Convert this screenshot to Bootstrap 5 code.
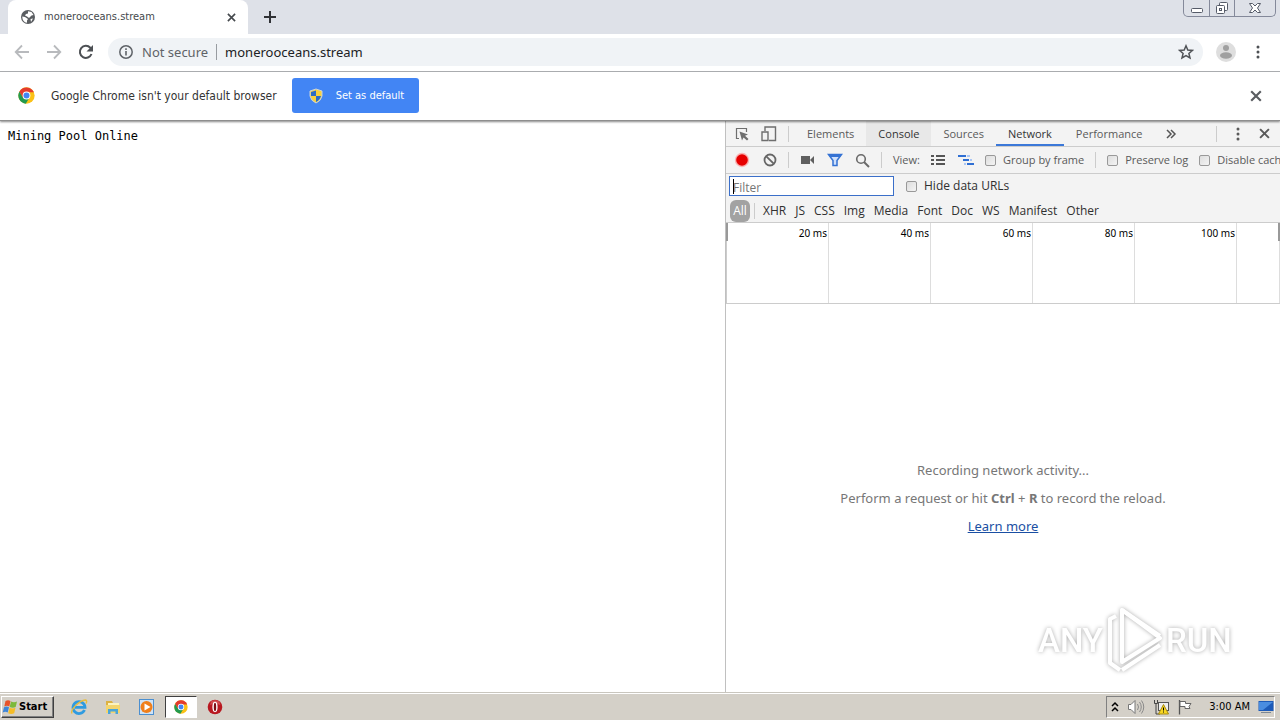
<!DOCTYPE html>
<html lang="en">
<head>
<meta charset="utf-8">
<meta name="viewport" content="width=device-width, initial-scale=1">
<title>monerooceans.stream</title>
<link href="https://cdn.jsdelivr.net/npm/bootstrap@5.3.0/dist/css/bootstrap.min.css" rel="stylesheet">
<style>
  body { font-family: "Open Sans", "Noto Sans", sans-serif; font-size: 12px; line-height: 16px; color: #333; background: #fff; }
  button { font: inherit; color: inherit; background: none; border: 0; padding: 0; }
  svg { display: block; flex: none; }
  .ui { font-family: "Noto Sans", sans-serif; }
  .narrow-ui { font-family: "DejaVu Sans Condensed", "DejaVu Sans", sans-serif; }

  /* browser window */
  .tabstrip { height: 34px; background: #dee1e8; padding-left: 8px; }
  .page-tab { width: 240px; height: 34px; background: #fff; border-radius: 8px 8px 0 0; padding: 0 12px; font-size: 11px; color: #45494d; }
  .new-tab { margin-left: 16px; color: #303236; }
  .win-ctl { height: 17px; margin-right: 4px; border: 1px solid #84899a; border-top: 0; border-radius: 0 0 5px 5px; }
  .win-ctl button { width: 25px; height: 16px; display: flex; justify-content: center; align-items: center; }
  .win-ctl button + button { border-left: 1px solid #84899a; }
  .win-ctl button:last-child { width: 41px; }
  .toolbar { height: 38px; border-bottom: 1px solid #b0b2b5; padding: 0 20px 1px 14px; }
  .omnibox { height: 28px; border-radius: 14px; background: #f0f3f6; padding: 0 9px 0 10px; margin: 0 13px 0 14px; font-size: 13px; color: #5f6368; }
  .omnibox input { border: 0; background: none; outline: 0; padding: 0; min-width: 0; color: #202124; }
  .omni-rule { width: 1px; height: 16px; background: #989ca1; margin: 0 8px; }
  .profile { margin-right: 20px; }
  .infobar { height: 49px; border-bottom: 1px solid #8e8e8e; padding: 0 18px 1px; font-size: 12px; position: relative; z-index: 1; box-shadow: 0 1px 2px #0007; }
  .set-default { width: 127px; height: 35px; background: #4285f4; color: #fff; border-radius: 3px; font-size: 11px; padding: 0 16px; margin-left: 15px; white-space: nowrap; }
  .dismiss { color: #5a5d61; }
  .page-area { min-height: 0; }
  .page-text { font-family: "DejaVu Sans Mono", monospace; font-size: 12px; color: #000; margin: 0; padding: 7px 8px; overflow: hidden; }

  /* developer tools */
  .devtools { flex: 0 0 555px; border-left: 1px solid #c0c0c0; color: #5a5a5a; white-space: nowrap; overflow: hidden; }
  .bar { background: #f3f3f3; }
  .bar > * { flex: none; }
  .dt-tabs { height: 26px; border-bottom: 1px solid #ccc; padding: 0 10px 0 8px; font-size: 11px; }
  .dt-tabs .dt-tab { height: 25px; padding: 2px 12px 0; border-bottom: 2px solid transparent; }
  .dt-tabs .hovered { background: #e8e8e8; color: #333; }
  .dt-tabs .chosen { border-bottom-color: #3b78d8; color: #333; }
  .dt-icons { gap: 11px; margin-right: 6px; }
  .dt-end { gap: 19px; }
  .dt-tools { height: 27px; border-bottom: 1px solid #ccc; padding-left: 8px; gap: 11px; font-size: 11px; }
  .dt-filter { height: 24px; padding-left: 3px; gap: 12px; color: #303030; }
  .dt-types { height: 25px; padding: 2px 0 0 4px; border-bottom: 1px solid #ccc; color: #303030; }
  .types { gap: 9px; }
  .rule { width: 1px; height: 16px; background: #ccc; }
  .bar input[type=checkbox] { appearance: none; width: 11px; height: 11px; border: 1px solid #999; border-radius: 2px; background: linear-gradient(135deg, #ddd, #f4f4f4); margin: 0 7px 0 0; }
  .bar label { display: flex; align-items: center; }
  .filter-box { width: 165px; height: 20px; border: 1px solid #3b6fc9; background: #fff; padding: 2px 3px 0; outline: 0; line-height: 16px; }
  .filter-box::placeholder { color: #757575; opacity: 1; }
  .filter-wrap { position: relative; }
  .filter-wrap i { position: absolute; left: 4px; top: 3px; width: 1px; height: 15px; background: #000; }
  .type-all { background: #a2a2a2; color: #fff; border-radius: 6px; height: 22px; width: 20px; margin-right: 4px; }
  .timeline { height: 81px; border-bottom: 1px solid #ccc; border-left: 1px solid #ccc; font-size: 10px; color: #000; position: relative; }
  .timeline > div { flex: 0 0 102px; border-right: 1px solid #ddd; text-align: right; padding: 2px 1px; }
  .timeline > div:last-of-type { flex: 1 1 0; }
  .timeline .grip { position: absolute; top: 0; left: -1px; width: 2px; height: 18px; background: #999; }
  .timeline .grip-end { left: auto; right: 0; }
  .hint { font-size: 13px; line-height: 20px; gap: 8px; color: #777; }
  .hint a { color: #1a4fa3; }

  .watermark { position: absolute; right: 40px; bottom: 16px; filter: drop-shadow(0 0 2px #0005); pointer-events: none; }
  .watermark text { font-family: "Liberation Sans Narrow", "Roboto", sans-serif; font-size: 33px; font-weight: 500; }

  /* taskbar */
  .taskbar { height: 28px; background: #d4d0c8; border-top: 1px solid #c9c6be; box-shadow: inset 0 1px #fff; padding: 1px 5px 0 1px; font-size: 11px; color: #000; }
  .raised { border: 1px solid; border-color: #fff #404040 #404040 #fff; box-shadow: inset -1px -1px #808080; }
  .sunken { border: 1px solid; border-color: #404040 #fff #fff #404040; background: #fff; }
  .start { width: 53px; height: 22px; font-weight: 700; gap: 1px; }
  .task { width: 32px; height: 22px; display: flex; align-items: center; justify-content: center; }
  .tasks { gap: 2px; margin-left: 9px; }
  .tray { height: 22px; border: 1px solid; border-color: #808080 #fff #fff #808080; padding-left: 4px; gap: 8px; }
  .clock { margin-left: 8px; }
</style>
</head>
<body class="d-flex flex-column vh-100 overflow-hidden">
<svg width="0" height="0" class="position-absolute" aria-hidden="true">
  <symbol id="chrome" viewBox="0 0 48 48">
    <circle cx="24" cy="24" r="23" fill="#fbc116"/>
    <path d="M4 12.500A23 23 0 0 0 22 47L33 29 24 24 14 29z" fill="#229a4f"/>
    <path d="M4 12.500 14 30 20 15H45A23 23 0 0 0 4 12.500z" fill="#e33b2e"/>
    <circle cx="24" cy="24" r="11" fill="#fff"/><circle cx="24" cy="24" r="8.500" fill="#4285f4"/>
  </symbol>
  <symbol id="cross" viewBox="0 0 10 10"><path d="M1 1 9 9M9 1 1 9" stroke="currentColor" stroke-width="1.800"/></symbol>
  <symbol id="dots" viewBox="0 0 4 14"><g fill="currentColor"><circle cx="2" cy="2" r="1.500"/><circle cx="2" cy="7" r="1.500"/><circle cx="2" cy="12" r="1.500"/></g></symbol>
</svg>

<header class="ui">
  <div class="tabstrip d-flex">
    <div class="page-tab narrow-ui d-flex align-items-center">
      <svg width="16" height="16" viewBox="0 0 16 16"><circle cx="8" cy="8" r="7" fill="#5a5d61"/><path d="M2.300 7.500 5 8l3 2-1 1.500v2.300C4 13.500 2.300 11 2.300 7.500zM8 2.300l3.500.8 2 3-2 .5L9 9 7 7.500l-2-1L6 5l2-.5zM10.500 10l2.500-.5-2 3.500z" fill="#fff"/></svg>
      <span class="ms-2 flex-grow-1">monerooceans.stream</span>
      <button aria-label="Close tab"><svg width="9" height="9"><use href="#cross"/></svg></button>
    </div>
    <button class="new-tab" aria-label="New tab"><svg width="12" height="12" viewBox="0 0 12 12"><path d="M6 0v12M0 6h12" stroke="currentColor" stroke-width="2"/></svg></button>
    <div class="win-ctl d-flex ms-auto">
      <button aria-label="Minimize"><svg width="14" height="14" viewBox="0 0 14 14"><rect x="1.500" y="7.500" width="11" height="4" rx="1" fill="#fff" stroke="#555b68"/></svg></button>
      <button aria-label="Restore"><svg width="14" height="14" viewBox="0 0 14 14" fill="#fff" stroke="#555b68"><rect x="4.500" y="1.500" width="8" height="8" rx="1"/><rect x="1.500" y="4.500" width="8" height="8" rx="1"/><rect x="4.500" y="7.500" width="2" height="2"/></svg></button>
      <button aria-label="Close window"><svg width="14" height="14" viewBox="0 0 14 14"><path d="M1.500 2.500h3L7 5l2.500-2.500h3L9.500 7l3 4.500h-3L7 9l-2.500 2.500h-3l3-4.500z" fill="#fff" stroke="#555b68"/></svg></button>
    </div>
  </div>
  <div class="toolbar d-flex align-items-center">
    <button aria-label="Back"><svg width="16" height="16" viewBox="0 0 16 16" fill="none" stroke="#b8babd" stroke-width="1.800"><path d="M15 8H2M8 1.500 1.700 8 8 14.500"/></svg></button>
    <button class="ms-3" aria-label="Forward"><svg width="16" height="16" viewBox="0 0 16 16" fill="none" stroke="#b8babd" stroke-width="1.800"><path d="M1 8h13M8 1.500 14.300 8 8 14.500"/></svg></button>
    <button class="ms-3" aria-label="Reload"><svg width="16" height="16" viewBox="0 0 16 16"><path d="M13.500 10A6 6 0 1 1 12.300 3.800L14 5.500" fill="none" stroke="#4d5054" stroke-width="2"/><path d="M15 1v6.500H8.500z" fill="#4d5054"/></svg></button>
    <div class="omnibox d-flex align-items-center flex-grow-1">
      <svg width="16" height="16" viewBox="0 0 16 16"><circle cx="8" cy="8" r="6.200" fill="none" stroke="#5f6368" stroke-width="1.500"/><path d="M8 7v4.500M8 4.300v1.600" stroke="#5f6368" stroke-width="1.600"/></svg>
      <label for="url" class="ms-2">Not secure</label>
      <span class="omni-rule"></span>
      <input id="url" class="flex-grow-1" value="monerooceans.stream">
      <button aria-label="Bookmark"><svg width="16" height="16" viewBox="0 0 16 16"><path d="M8 1.800 9.800 6l4.600.4-3.500 3 1.100 4.500L8 11.500l-4 2.400 1.100-4.500-3.500-3L6.200 6z" fill="none" stroke="#505357" stroke-width="1.500"/></svg></button>
    </div>
    <button class="profile" aria-label="Profile"><svg width="20" height="20" viewBox="0 0 20 20"><circle cx="10" cy="10" r="10" fill="#dedede"/><circle cx="10" cy="6" r="3" fill="#a0a0a0"/><ellipse cx="10" cy="13.500" rx="6" ry="3.200" fill="#a0a0a0"/></svg></button>
    <button aria-label="Menu"><svg width="4" height="14" color="#4d5054"><use href="#dots"/></svg></button>
  </div>
  <div class="infobar narrow-ui d-flex align-items-center">
    <svg width="17" height="17"><use href="#chrome"/></svg>
    <span class="ms-3">Google Chrome isn't your default browser</span>
    <button class="set-default d-flex align-items-center">
      <svg width="16" height="16" viewBox="0 0 16 16"><path d="M8 1 14 3v5q-1 5-6 7-5-2-6-7V3z" fill="#f7d13d"/><path d="M8 2.500V8H3V4zM8 8h5q-1 4-5 6z" fill="#2b6cc4"/><path d="M8 1 14 3v5q-1 5-6 7-5-2-6-7V3z" fill="none" stroke="#c8d3de"/></svg>
      <span class="ms-2 ps-1">Set as default</span>
    </button>
    <button class="dismiss ms-auto" aria-label="Dismiss"><svg width="12" height="12"><use href="#cross"/></svg></button>
  </div>
</header>

<main class="page-area d-flex flex-grow-1 position-relative">
  <pre class="page-text flex-grow-1">Mining Pool Online</pre>

  <aside class="devtools d-flex flex-column">
    <nav class="bar dt-tabs d-flex align-items-center">
      <div class="dt-icons d-flex align-items-center">
        <button aria-label="Inspect"><svg width="16" height="16" viewBox="0 0 16 16"><path d="M5 12.500H2.500v-10h10V6" fill="none" stroke="#6e6e6e" stroke-width="1.200"/><path d="M5.500 5.500 14 8.500l-3 1.300 3.500 3.200-1.500 1.500-3.500-3L8 14.500z" fill="#6e6e6e"/></svg></button>
        <button aria-label="Device toolbar"><svg width="16" height="16" viewBox="0 0 16 16" fill="none" stroke="#6e6e6e" stroke-width="1.400"><path d="M4 5V1h10.500v13.500H8"/><path d="M1 6h6v8.500H1z"/></svg></button>
        <span class="rule"></span>
      </div>
      <button class="dt-tab">Elements</button>
      <button class="dt-tab hovered">Console</button>
      <button class="dt-tab">Sources</button>
      <button class="dt-tab chosen">Network</button>
      <button class="dt-tab">Performance</button>
      <button class="ms-2 ps-1" aria-label="More tabs"><svg width="12" height="10" viewBox="0 0 12 10"><path d="M1 1l4 4-4 4M5 1l4 4-4 4" fill="none" stroke="#555" stroke-width="1.500"/></svg></button>
      <div class="dt-end ms-auto d-flex align-items-center">
        <span class="rule"></span>
        <button aria-label="Customize"><svg width="4" height="14"><use href="#dots"/></svg></button>
        <button aria-label="Close tools"><svg width="11" height="11"><use href="#cross"/></svg></button>
      </div>
    </nav>
    <div class="bar dt-tools d-flex align-items-center">
      <button aria-label="Record"><svg width="16" height="16" viewBox="0 0 16 16"><circle cx="8" cy="8" r="7.200" fill="#f9b3b3"/><circle cx="8" cy="8" r="5.800" fill="#e60000"/></svg></button>
      <button aria-label="Clear"><svg width="16" height="16" viewBox="0 0 16 16" fill="none" stroke="#666" stroke-width="1.800"><circle cx="9" cy="8" r="5.500"/><path d="m5.300 4.300 7.400 7.400"/></svg></button>
      <span class="rule"></span>
      <button aria-label="Screenshots"><svg width="16" height="14" viewBox="0 0 16 14"><path d="M1 3h9v8H1zM10 7 14 3v8z" fill="#5f5f5f"/></svg></button>
      <button aria-label="Filter"><svg width="16" height="14" viewBox="0 0 16 14"><path d="M1.500 1.500h13l-4.500 6v5H6v-5z" fill="#cfe0fb" stroke="#3472d4" stroke-width="1.500"/><path d="M1.500 1.500h13L13 4H3z" fill="#3472d4"/></svg></button>
      <button aria-label="Search"><svg width="16" height="15" viewBox="0 0 16 15" fill="none" stroke="#6a6a6a" stroke-width="1.600"><circle cx="7" cy="6" r="4.300"/><path d="m10 9 5 5" stroke-width="2"/></svg></button>
      <span class="rule"></span>
      <span>View:</span>
      <button aria-label="Large rows"><svg width="16" height="12" viewBox="0 0 16 12" fill="#555"><path d="M0 1h3v2H0zM5 1h9v2H5zM0 5h3v2H0zM5 5h9v2H5zM0 9h3v2H0zM5 9h9v2H5z"/></svg></button>
      <button aria-label="Overview"><svg width="16" height="12" viewBox="0 0 16 12"><path d="M0 1h8v2H0zM5 5h6v2H5zM9 9h7v2H9z" fill="#2f6fd3"/><path d="M9 1h3v2H9zM12 5h2v2h-2zM6 9h2v2H6z" fill="#a9c6f5"/></svg></button>
      <label><input type="checkbox">Group by frame</label>
      <span class="rule"></span>
      <label><input type="checkbox">Preserve log</label>
      <label><input type="checkbox">Disable cache</label>
    </div>
    <div class="bar dt-filter d-flex align-items-center">
      <div class="filter-wrap d-flex"><input class="filter-box" type="text" placeholder="Filter" aria-label="Filter"><i></i></div>
      <label><input type="checkbox">Hide data URLs</label>
    </div>
    <div class="bar dt-types d-flex align-items-center">
      <button class="type-all">All</button><span class="rule me-2"></span>
      <div class="d-flex types">
        <button>XHR</button><button>JS</button><button>CSS</button><button>Img</button><button>Media</button><button>Font</button><button>Doc</button><button>WS</button><button>Manifest</button><button>Other</button>
      </div>
    </div>
    <div class="timeline ui d-flex">
      <div>20 ms</div><div>40 ms</div><div>60 ms</div><div>80 ms</div><div>100 ms</div><div></div>
      <span class="grip"></span><span class="grip grip-end"></span>
    </div>
    <div class="hint ui flex-grow-1 d-flex flex-column align-items-center justify-content-center">
      <span>Recording network activity...</span>
      <span>Perform a request or hit <b>Ctrl</b> + <b>R</b> to record the reload.</span>
      <a href="#">Learn more</a>
    </div>
  </aside>

  <svg class="watermark" width="210" height="72" viewBox="0 0 210 72" role="img" aria-label="ANY RUN">
    <text x="8" y="48" fill="#fff">ANY</text>
    <text x="136" y="48" fill="#fff">RUN</text>
    <g fill="none" stroke="#fff" stroke-width="4" stroke-linejoin="round">
      <path d="M86 12 80 15V59L90 66"/>
      <path d="M92 6V58L130 34z"/>
      <path d="M92 6 130 32M92 66 130 41"/>
    </g>
  </svg>
</main>

<footer class="taskbar d-flex align-items-center">
  <button class="start raised narrow-ui d-flex align-items-center">
    <svg width="16" height="16" viewBox="0 0 16 16"><path d="M3.500 2Q6 .5 8.500 2L7.300 7.500Q5 6 2.300 7.500z" fill="#e8532a"/><path d="M9 2.500q3 1.500 6 0L13.700 8q-3 1.500-6 0z" fill="#7db93b"/><path d="M2 8.200Q4.500 6.700 7 8.200L5.700 13.500Q3.500 12 .7 13.500z" fill="#3f86d8"/><path d="M7.500 8.700q3 1.500 6 0l-1.300 5.500q-3 1.500-6 0z" fill="#f6bd27"/></svg>Start
  </button>
  <div class="tasks d-flex">
    <button class="task" aria-label="Internet Explorer"><svg width="18" height="18" viewBox="0 0 18 18" fill="none"><path d="M14.500 12A6 6 0 1 1 15 9.300H5" stroke="#2f9be0" stroke-width="2.800"/><path d="M2 15.500C0 12 9 2.500 15.500 2q2 .5.500 3.500" stroke="#e9bd3d" stroke-width="1.400"/></svg></button>
    <button class="task" aria-label="Explorer"><svg width="18" height="18" viewBox="0 0 18 18"><path d="M2 3h6l1 2h6v9H2z" fill="#dcb142"/><path d="M4 5h11v4H4z" fill="#fbf3c0"/><path d="M2 7h14v8H2z" fill="#f3d56e"/><path d="M4 16v-5h10v5h-2.500v-2.500h-5V16z" fill="#4aa5d8"/></svg></button>
    <button class="task" aria-label="Media Player"><svg width="18" height="18" viewBox="0 0 18 18"><rect x="1.500" y="1.500" width="14" height="15" fill="#cfe3f6" stroke="#4b8fd0"/><circle cx="8.500" cy="9" r="6" fill="#f07f1b"/><path d="M6.500 5.500v7l6-3.500z" fill="#fff"/></svg></button>
    <button class="task sunken" aria-label="Chrome"><svg width="14" height="14"><use href="#chrome"/></svg></button>
    <button class="task" aria-label="Opera"><svg width="16" height="16" viewBox="0 0 16 16"><circle cx="8" cy="8" r="7.300" fill="#b81820"/><path d="M4 2.500Q8 0 12 2.500 14 5 13 6 8 3 3 6z" fill="#d04a4c"/><ellipse cx="8" cy="8" rx="2.600" ry="5.200" fill="#fff"/><ellipse cx="8" cy="8" rx="1.200" ry="4.300" fill="#7c0d12"/></svg></button>
  </div>
  <div class="tray narrow-ui ms-auto d-flex align-items-center">
    <svg width="8" height="12" viewBox="0 0 8 12"><path d="M1 5 4 2 7 5M1 10 4 7 7 10" fill="none" stroke="#000" stroke-width="1.500"/></svg>
    <svg width="18" height="16" viewBox="0 0 18 16"><path d="M1.500 5.500H4l4-4v13l-4-4H1.500z" fill="#fff" stroke="#777"/><path d="M10.500 5q2 3 0 6M12.500 3q3.500 5 0 10M14.500 1.500q4.500 6.500 0 13" fill="none" stroke="#8a8a8a"/></svg>
    <svg width="16" height="16" viewBox="0 0 16 16"><rect x="5.500" y="3.500" width="10" height="8" fill="#eee" stroke="#555"/><path d="M1.500 1v3.500h3V1M3 5v10h4" fill="none" stroke="#444"/><path d="M10.500 5.500 15.500 15h-10z" fill="#f8d722" stroke="#a88b10"/><path d="M10.500 8.500v3M10.500 12.500v1" stroke="#000"/></svg>
    <svg width="16" height="16" viewBox="0 0 16 16"><path d="M2.500 1v14.500" stroke="#555" stroke-width="1.300"/><path d="M3 2.500h5.500v2H14l-2 3 1 2H8v-2H3z" fill="#fff" stroke="#666"/></svg>
    <span class="clock">3:00 AM</span>
    <svg width="16" height="14" viewBox="0 0 16 14"><rect x=".5" y="1" width="15" height="10" fill="#1d5bb8"/><path d="M1 2h14L5 10H1z" fill="#4a8de0"/><path d="M3 12.500h10" stroke="#7c8794"/></svg>
  </div>
</footer>
<script src="https://cdn.jsdelivr.net/npm/bootstrap@5.3.0/dist/js/bootstrap.bundle.min.js"></script>
</body>
</html>
